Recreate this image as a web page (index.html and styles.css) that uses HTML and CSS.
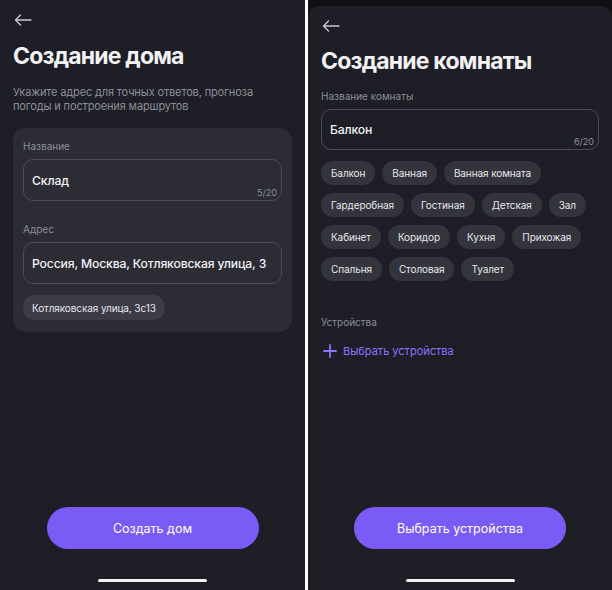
FILE: index.html
```html
<!DOCTYPE html>
<html lang="ru">
<head>
  <meta charset="UTF-8">
  <meta name="viewport" content="width=device-width, initial-scale=1.0">
  <title>Создание дома и комнаты</title>
  <link rel="stylesheet" href="styles.css">
</head>
<body>
  <div class="screens">

    <!-- Screen 1: create home -->
    <section class="screen">
      <div class="content">
        <button class="back" aria-label="Назад">
          <svg width="18" height="12" viewBox="0 0 18 12"><path d="M17 6H1.5M6.5 1L1.5 6l5 5" fill="none" stroke="currentColor" stroke-width="1.4" stroke-linecap="round" stroke-linejoin="round"/></svg>
        </button>
        <h1>Создание дома</h1>
        <p class="hint">Укажите адрес для точных ответов, прогноза погоды и построения маршрутов</p>

        <div class="card">
          <label class="label">Название</label>
          <div class="input">
            <span class="value">Склад</span>
            <span class="counter">5/20</span>
          </div>

          <label class="label label-gap">Адрес</label>
          <div class="input">
            <span class="value">Россия, Москва, Котляковская улица, 3</span>
          </div>

          <div class="suggest">
            <span class="chip chip-light">Котляковская улица, 3с13</span>
          </div>
        </div>
      </div>

      <div class="footer">
        <button class="primary">Создать дом</button>
        <div class="home-bar"></div>
      </div>
    </section>

    <div class="divider"></div>

    <!-- Screen 2: create room -->
    <section class="screen screen-modal">
      <!-- status bar peeking out above the sheet -->
      <div class="status">
        <div class="status-time">
          <i></i><i></i><i></i><i></i>
        </div>
        <div class="status-icons">
          <i></i><i></i>
        </div>
      </div>
      <div class="sheet">
        <div class="content">
          <button class="back" aria-label="Назад">
            <svg width="18" height="12" viewBox="0 0 18 12"><path d="M17 6H1.5M6.5 1L1.5 6l5 5" fill="none" stroke="currentColor" stroke-width="1.4" stroke-linecap="round" stroke-linejoin="round"/></svg>
          </button>
          <h1>Создание комнаты</h1>

          <label class="label room-label">Название комнаты</label>
          <div class="input">
            <span class="value">Балкон</span>
            <span class="counter">6/20</span>
          </div>

          <div class="chips">
            <span class="chip">Балкон</span>
            <span class="chip">Ванная</span>
            <span class="chip">Ванная комната</span>
            <span class="chip">Гардеробная</span>
            <span class="chip">Гостиная</span>
            <span class="chip">Детская</span>
            <span class="chip">Зал</span>
            <span class="chip">Кабинет</span>
            <span class="chip">Коридор</span>
            <span class="chip">Кухня</span>
            <span class="chip">Прихожая</span>
            <span class="chip">Спальня</span>
            <span class="chip">Столовая</span>
            <span class="chip">Туалет</span>
          </div>

          <label class="label devices-label">Устройства</label>
          <a class="add-link" href="#">
            <svg width="14" height="14" viewBox="0 0 14 14"><path d="M7 1v12M1 7h12" stroke="currentColor" stroke-width="1.8" stroke-linecap="round"/></svg>
            Выбрать устройства
          </a>
        </div>

        <div class="footer">
          <button class="primary">Выбрать устройства</button>
          <div class="home-bar"></div>
        </div>
      </div>
    </section>

  </div>
</body>
</html>
```

FILE: styles.css
```css
* {
  box-sizing: border-box;
}
body {
  margin: 0;
  background: #ffffff;
  font-family: Inter, "Noto Sans", sans-serif;
  color: #f2f2f4;
}
.screens {
  display: flex;
  width: 612px;
  height: 590px;
}
.divider {
  width: 3px;
  background: #ffffff;
}
.screen {
  width: 305px;
  display: flex;
  flex-direction: column;
  background: #1d1e26;
}
.screen-modal {
  width: 304px;
  background: #0f1013;
}
.status {
  height: 6px;
  display: flex;
  justify-content: space-between;
  align-items: flex-start;
  padding: 0 28px 0 14px;
}
.status i {
  display: inline-block;
  width: 9px;
  height: 3px;
  margin-right: 3px;
  border-radius: 0 0 2px 2px;
  background: #4a4b50;
}
.status-icons i {
  width: 12px;
  margin-right: 14px;
}
.sheet {
  flex: 1;
  display: flex;
  flex-direction: column;
  background: #1d1e26;
  border-radius: 11px 11px 0 0;
}
.content {
  padding: 0 13px;
}
.back {
  display: flex;
  align-items: center;
  height: 14px;
  margin: 13px 0 0 1px;
  padding: 0;
  background: none;
  border: none;
  color: #c9cad0;
}
h1 {
  margin: 15px 0 0;
  font-size: 23px;
  line-height: 28px;
  font-weight: 700;
  letter-spacing: -0.8px;
}
.hint {
  margin: 15px 0 0;
  font-size: 11px;
  line-height: 14px;
  letter-spacing: -0.15px;
  color: #8c8e97;
}
.card {
  margin-top: 15px;
  padding: 11px 10px 12px;
  background: #2b2c34;
  border-radius: 13px;
}
.label {
  display: block;
  font-size: 10px;
  line-height: 14px;
  color: #8c8e97;
}
.label-gap {
  margin-top: 21px;
}
.input {
  position: relative;
  display: flex;
  align-items: center;
  height: 42px;
  margin-top: 6px;
  padding: 0 8px;
  border: 1px solid #4a4b55;
  border-radius: 10px;
}
.value {
  font-size: 12.2px;
  font-weight: 500;
  letter-spacing: -0.15px;
  white-space: nowrap;
}
.counter {
  position: absolute;
  right: 4px;
  bottom: 2px;
  font-size: 9px;
  color: #8c8e97;
}
.suggest {
  margin-top: 11px;
  display: flex;
}
.chip {
  display: inline-flex;
  align-items: center;
  height: 24px;
  padding: 0 10px;
  border-radius: 12px;
  background: #33343c;
  font-size: 10px;
  letter-spacing: -0.1px;
  color: #e6e6ea;
  white-space: nowrap;
}
.chip-light {
  height: 25px;
  padding: 0 9px;
  background: #3b3c46;
}
.chips {
  display: flex;
  flex-wrap: wrap;
  gap: 8px 7px;
  margin-top: 11px;
}
.screen-modal h1 {
  margin-top: 14px;
}
.room-label {
  margin-top: 14px;
}
.screen-modal .input {
  height: 41px;
}
.devices-label {
  margin-top: 34px;
}
.add-link {
  display: flex;
  align-items: center;
  gap: 6px;
  margin: 15px 0 0 2px;
  font-size: 11px;
  color: #8f72ff;
  text-decoration: none;
}
.footer {
  margin-top: auto;
  display: flex;
  flex-direction: column;
  align-items: center;
  padding-bottom: 8px;
}
.primary {
  width: 212px;
  height: 42px;
  border: none;
  border-radius: 21px;
  background: #7b5bf5;
  color: #ffffff;
  font-family: inherit;
  font-size: 12.5px;
}
.home-bar {
  width: 109px;
  height: 3px;
  margin-top: 30px;
  border-radius: 2px;
  background: #f4f4f6;
}
```
